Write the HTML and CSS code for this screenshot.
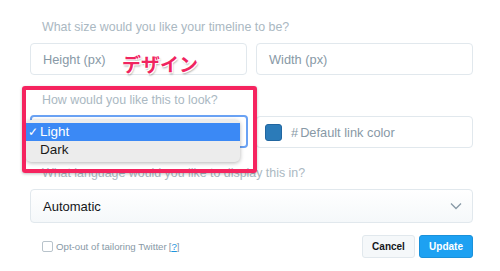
FILE: index.html
```html
<!DOCTYPE html>
<html lang="en">
<head>
<meta charset="utf-8">
<link rel="stylesheet" href="styles.css">
</head>
<body>
<div class="page">
  <form class="form">
    <div class="section">
      <div class="label">What size would you like your timeline to be?</div>
      <div class="row">
        <div class="field">Height (px)</div>
        <div class="field">Width (px)</div>
      </div>
    </div>
    <div class="section">
      <div class="label">How would you like this to look?</div>
      <div class="row">
        <div class="field field-focus"></div>
        <div class="field field-color"><span class="swatch"></span><span class="hash">#</span>Default link color</div>
      </div>
    </div>
    <div class="section">
      <div class="label">What language would you like to display this in?</div>
      <div class="select">
        <span>Automatic</span>
        <svg class="chev" width="12" height="8" viewBox="0 0 12 8"><path d="M1 1.5 L6 6.5 L11 1.5" fill="none" stroke="#8899a6" stroke-width="1.3"/></svg>
      </div>
    </div>
    <div class="footer">
      <label class="opt"><span class="check"></span>Opt-out of tailoring Twitter <span class="q">[<u>?</u>]</span></label>
      <div class="buttons">
        <span class="btn btn-cancel">Cancel</span>
        <span class="btn btn-update">Update</span>
      </div>
    </div>
  </form>

  <div class="menu">
    <div class="menu-item selected"><span class="tick">✓</span>Light</div>
    <div class="menu-item">Dark</div>
  </div>
  <div class="annot-box"></div>
  <div class="annot-text">デザイン</div>
</div>
</body>
</html>
```
FILE: styles.css
```css
html, body {
  margin: 0;
  padding: 0;
  background: #ffffff;
}
.page {
  position: relative;
  width: 500px;
  height: 271px;
  overflow: hidden;
  font-family: "Liberation Sans", Arial, sans-serif;
}
.form {
  padding: 18px 27px 0 30px;
}
.section {
  margin-bottom: 16px;
}
.label {
  padding-left: 12px;
  font-size: 12.4px;
  line-height: 18px;
  color: #aab8c2;
  margin-bottom: 7px;
  white-space: nowrap;
}
.row {
  display: grid;
  grid-template-columns: 217px 217px;
  column-gap: 9px;
}
.field {
  box-sizing: border-box;
  height: 32px;
  border: 1px solid #e1e8ed;
  border-radius: 4px;
  padding-left: 12px;
  display: flex;
  align-items: center;
  font-size: 12.8px;
  color: #8899a6;
}
.field-focus {
  height: 33px;
  width: 218px;
  border: 2px solid #6aa2f4;
  border-radius: 4px;
  margin-top: -1px;
}
.field-color {
  padding-left: 8px;
}
.swatch {
  width: 17px;
  height: 17px;
  background: #2b7bb9;
  border: 1px solid #2166a0;
  box-sizing: border-box;
  border-radius: 3px;
  margin-right: 9px;
}
.hash {
  margin-right: 2px;
}
.select {
  box-sizing: border-box;
  height: 34px;
  border: 1px solid #e1e8ed;
  border-radius: 4px;
  background: linear-gradient(#ffffff, #f5f8fa);
  display: flex;
  align-items: center;
  justify-content: space-between;
  padding: 0 10px 0 12px;
  font-size: 13px;
  color: #14171a;
}
.footer {
  display: flex;
  justify-content: space-between;
  align-items: center;
  margin-top: -4px;
}
.opt {
  display: flex;
  align-items: center;
  padding-left: 12px;
  font-size: 9.7px;
  color: #8899a6;
}
.check {
  width: 9px;
  height: 9px;
  border: 1px solid #b8c3cb;
  border-radius: 2px;
  margin-right: 3px;
  background: #fff;
}
.q {
  margin-left: 2px;
}
.q u {
  color: #1b95e0;
}
.buttons {
  display: flex;
  gap: 4px;
}
.btn {
  box-sizing: border-box;
  height: 23px;
  display: flex;
  align-items: center;
  justify-content: center;
  font-size: 10px;
  font-weight: bold;
  border-radius: 3px;
}
.btn-cancel {
  width: 53px;
  border: 1px solid #e1e8ed;
  background: #f5f8fa;
  color: #14171a;
}
.btn-update {
  width: 54px;
  background: #1da1f2;
  color: #ffffff;
  border: 1px solid #1a91da;
}
.menu {
  position: absolute;
  left: 26px;
  top: 120px;
  width: 214px;
  height: 42px;
  box-sizing: border-box;
  padding-top: 3px;
  background: #ececec;
  border-radius: 5px;
  box-shadow: 0 1px 4px rgba(0,0,0,0.3);
  font-size: 13.5px;
  color: #1a1a1a;
}
.menu-item {
  position: relative;
  height: 18px;
  line-height: 18px;
  padding-left: 14px;
}
.menu-item.selected {
  background: #3b89f5;
  color: #fff;
}
.tick {
  position: absolute;
  left: 2px;
  font-size: 12px;
}
.annot-box {
  position: absolute;
  left: 22px;
  top: 86px;
  width: 235px;
  height: 87px;
  box-sizing: border-box;
  border: 4px solid #f5245f;
  border-radius: 3px;
  box-shadow: 0 1px 3px rgba(0,0,0,0.25);
}
.annot-text {
  position: absolute;
  left: 122px;
  top: 51px;
  font-family: "Noto Sans CJK JP", sans-serif;
  font-weight: bold;
  font-size: 19px;
  line-height: 26px;
  color: #f0245f;
  text-shadow: -1px -1px 0 #fff, 1px -1px 0 #fff, -1px 1px 0 #fff, 1px 1px 0 #fff, 1px 2px 2px rgba(0,0,0,0.35);
}
```
